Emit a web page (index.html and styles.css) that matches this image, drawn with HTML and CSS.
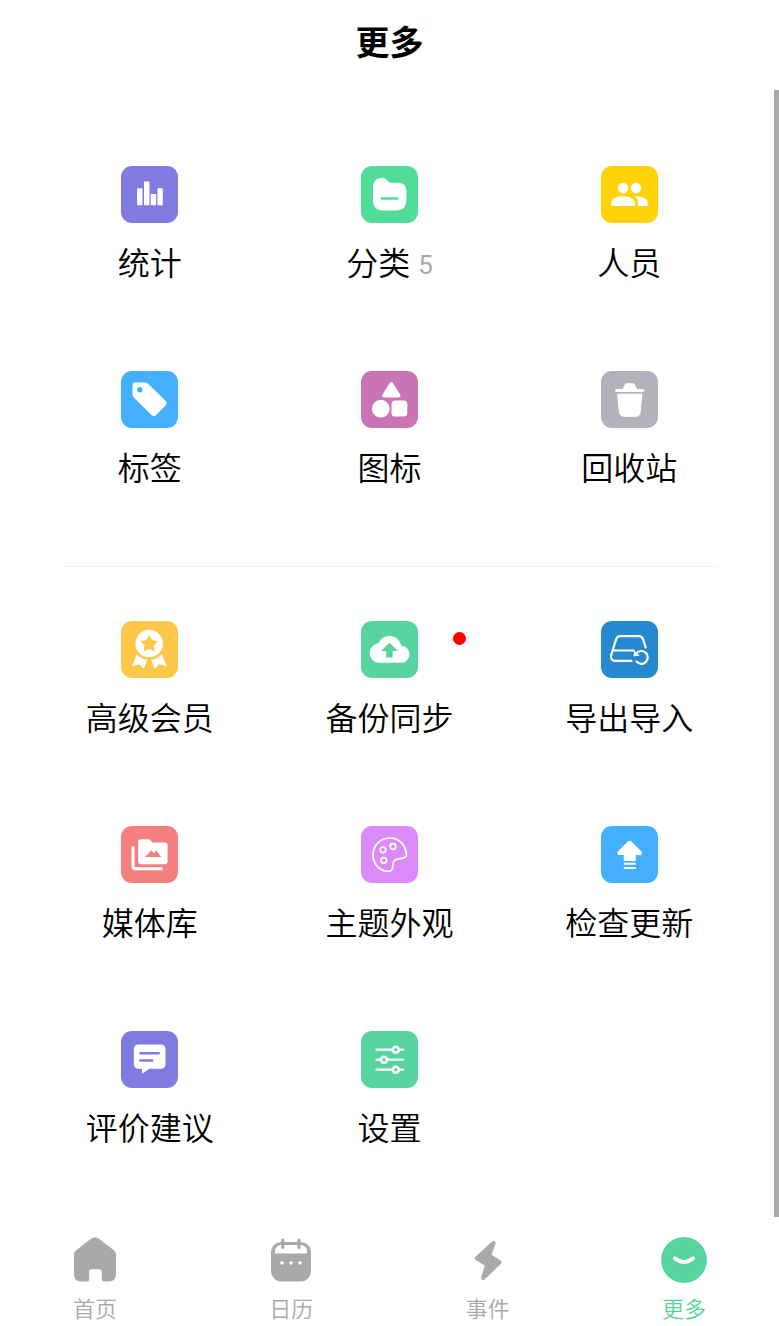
FILE: index.html
```html
<!DOCTYPE html>
<html lang="zh-CN">
<head>
<meta charset="utf-8">
<meta name="viewport" content="width=device-width, initial-scale=1">
<title>更多</title>
<link rel="stylesheet" href="styles.css">
</head>
<body>
<div class="app">
  <header class="header"><h1 class="title">更多</h1></header>

  <main class="content">
    <div class="scrollbar" aria-hidden="true"></div>

    <section class="group group-main">
      <a class="item" href="#stats">
        <svg class="tile violet" viewBox="0 0 57 57" aria-hidden="true"><g fill="#fff"><rect x="16" y="22.300" width="5.500" height="17" rx=".7"/><rect x="23" y="15.500" width="5.500" height="23.800" rx=".7"/><rect x="29.700" y="28" width="5.500" height="11.300" rx=".7"/><rect x="36.500" y="22.300" width="5.300" height="17" rx=".7"/></g></svg>
        <span class="label">统计</span>
      </a>
      <a class="item" href="#categories">
        <svg class="tile lime" viewBox="0 0 57 57" aria-hidden="true"><path fill="#fff" d="M12 22c0-6.500 3-10 8.500-10h1c4.500 0 5.500 4.800 8.500 4.800h6.500c6 0 8.800 2.800 8.800 8.200v9c0 7-3.500 10.500-10.500 10.500H22.500C15.500 44.500 12 41 12 34z"/><path class="stroke-lime" d="M20.800 32.500h15.400" stroke-width="2.600" stroke-linecap="round"/></svg>
        <span class="label">分类<span class="count">5</span></span>
      </a>
      <a class="item" href="#people">
        <svg class="tile yellow" viewBox="0 0 57 57" aria-hidden="true"><g fill="#fff"><circle cx="22" cy="22" r="5.200"/><circle cx="35" cy="22" r="5.200"/><path d="M10.300 40v-3.200c0-4.300 6-6.600 11.800-6.600s11.800 2.300 11.800 6.600V40zM33.600 30.200c6.800-.2 13.200 2.100 13.200 6.600V40H37v-3.200c0-2.800-1.200-5-3.400-6.600z"/></g></svg>
        <span class="label">人员</span>
      </a>
      <a class="item" href="#tags">
        <svg class="tile blue" viewBox="0 0 57 57" aria-hidden="true"><path fill="#fff" stroke="#fff" stroke-width="2" stroke-linejoin="round" d="M14 12.500h9.800c1 0 1.800.3 2.500 1l17.300 16.800c1.200 1.200 1.200 2.500 0 3.700l-9 9c-1.200 1.200-2.500 1.200-3.700 0L13.700 26c-.8-.8-1.200-1.500-1.200-2.600V14c0-.9.600-1.500 1.500-1.500z"/><circle class="fill-blue" cx="18.800" cy="18.800" r="2.700"/></svg>
        <span class="label">标签</span>
      </a>
      <a class="item" href="#icons">
        <svg class="tile pink" viewBox="0 0 57 57" aria-hidden="true"><g fill="#fff"><path d="M28.800 11.800c.7-1.200 2.300-1.200 3 0l7.300 11.800c.9 1.500.2 2.900-1.500 2.900H23c-1.700 0-2.400-1.400-1.500-2.900z"/><circle cx="19.800" cy="37.700" r="8.900"/><rect x="30.500" y="29.500" width="15.800" height="16" rx="3.500"/></g></svg>
        <span class="label">图标</span>
      </a>
      <a class="item" href="#trash">
        <svg class="tile gray" viewBox="0 0 57 57" aria-hidden="true"><g fill="#fff"><path d="M15.500 18h6.200l1.600-3.600c.8-1.700 1.500-2.100 3.200-2.100h4.700c1.700 0 2.400.4 3.200 2.100L36 18h6c1.900 0 1.900 3 0 3H15.500c-1.900 0-1.900-3 0-3z"/><path d="M16.700 23.200h24.200l-1.700 17.700c-.3 3-1.800 4.400-4.700 4.400H23c-2.900 0-4.300-1.500-4.600-4.400z" stroke="#fff" stroke-linejoin="round"/></g></svg>
        <span class="label">回收站</span>
      </a>
    </section>

    <section class="group group-more">
      <a class="item" href="#premium">
        <svg class="tile amber" viewBox="0 0 57 57" aria-hidden="true"><g fill="#fff"><circle cx="28.200" cy="22.500" r="13.700"/><path d="M15.800 33.200c2.800 3.400 6.200 5 10.400 5.500L22.700 47.700l-4.500-4.500-7.200 2zM40.600 33.200c-2.800 3.400-6.200 5-10.400 5.500l3.500 9 4.500-4.500 7.700 2z"/></g><path class="fill-amber stroke-amber" stroke-linejoin="round" d="M28.200 14.500l2.500 5.100 5.600.8-4 4 .9 5.600-5-2.700-5 2.700.9-5.600-4-4 5.600-.8z"/></svg>
        <span class="label">高级会员</span>
      </a>
      <a class="item" href="#backup">
        <svg class="tile green" viewBox="0 0 57 57" aria-hidden="true"><path fill="#fff" d="M18.500 41.800C12.800 41.800 8.800 37.500 8.800 32c0-5.200 3.700-9.200 8.700-9.800C19.600 17.800 23.700 15 28.500 15c5.900 0 10.700 4.200 11.800 9.800 4.500.3 8.200 3.800 8.200 8.400 0 4.800-3.800 8.600-8.600 8.600z"/><path class="fill-green" d="M28.500 21.700l8.400 8.300h-5.200v6.500h-6.500V30H20z"/></svg>
        <span class="label">备份同步</span>
        <span class="badge"></span>
      </a>
      <a class="item" href="#transfer">
        <svg class="tile ocean" viewBox="0 0 57 57" aria-hidden="true"><g fill="none" stroke="#fff" stroke-width="2.200" stroke-linecap="round" stroke-linejoin="round"><path d="M44.700 26.500l-2.800-8.300c-.9-2.400-1.700-3-4-3H19.300c-2.500 0-3.300.7-4.100 3L10.300 33.500c-1.200 3.800.7 6.300 4 6.300h16.200M12 29.500h20.500"/><path d="M35.300 32.400a6.400 6.400 0 1 1 .2 8.200"/></g><path fill="#fff" d="M32.600 35.200l6.200-.4-5.600-5.300z"/></svg>
        <span class="label">导出导入</span>
      </a>
      <a class="item" href="#media">
        <svg class="tile coral" viewBox="0 0 57 57" aria-hidden="true"><path fill="#fff" d="M17.200 16c0-2 1-2.800 2.800-2.800h7.500c1 0 1.700.4 2.300 1.200l1.800 2.100h12c2 0 3 1 3 3v15.700c0 2-1 3-3 3H20.200c-2 0-3-1-3-3z"/><path d="M12 20.200v20.300c0 1.500.8 2.200 2.200 2.200h27.300" fill="none" stroke="#fff" stroke-width="3"/><path class="fill-coral" d="M24 31l6.200-6.500 3 2.700L35 24l5.300 7z"/></svg>
        <span class="label">媒体库</span>
      </a>
      <a class="item" href="#theme">
        <svg class="tile orchid" viewBox="0 0 57 57" aria-hidden="true"><g fill="none" stroke="#fff" stroke-width="1.700" stroke-linejoin="round"><path d="M26.500 45.300C18 44.600 12 37.500 12 29c0-9.800 7.500-17 17-17 8.700 0 14.800 6 16.500 15.500.5 3-1.500 4.300-4.300 4.800-4.400.7-8.400.6-9.200 5-.6 4.600.4 8.300-5.500 8z"/><circle cx="22" cy="23.800" r="2.800"/><circle cx="32" cy="20.500" r="2.800"/><circle cx="22.800" cy="34.300" r="2.800"/></g></svg>
        <span class="label">主题外观</span>
      </a>
      <a class="item" href="#update">
        <svg class="tile blue" viewBox="0 0 57 57" aria-hidden="true"><g fill="#fff"><path d="M27.200 15.300c1-.9 2-.9 3 0l10.200 10.200c1.500 1.600.8 3.500-1.300 3.500h-4.300v6H22.700v-6h-4.500c-2.100 0-2.700-1.900-1.200-3.500z"/><rect x="22.700" y="36.700" width="12.100" height="2" rx=".8"/><rect x="22.700" y="41" width="12.100" height="2" rx=".8"/></g></svg>
        <span class="label">检查更新</span>
      </a>
      <a class="item" href="#feedback">
        <svg class="tile violet" viewBox="0 0 57 57" aria-hidden="true"><path fill="#fff" d="M17.500 13.500h22.300c3 0 4.700 1.700 4.700 4.700V33c0 3-1.700 4.700-4.700 4.700H28.500L21 43v-5.300h-3.500c-3 0-4.700-1.700-4.700-4.700V18.200c0-3 1.700-4.700 4.700-4.700z"/><path class="stroke-violet" d="M19.300 22.300h18.400M19.300 29.500h12" stroke-width="2.400" stroke-linecap="round"/></svg>
        <span class="label">评价建议</span>
      </a>
      <a class="item" href="#settings">
        <svg class="tile green" viewBox="0 0 57 57" aria-hidden="true"><path d="M15.500 18.700h26.700M15.500 28.700h26.700M15.500 38.700h26.700" stroke="#fff" stroke-width="2.300" stroke-linecap="round"/><g class="fill-green" stroke="#fff" stroke-width="2.500"><circle cx="34.800" cy="18.700" r="3"/><circle cx="23" cy="28.700" r="3"/><circle cx="34.800" cy="38.700" r="3"/></g></svg>
        <span class="label">设置</span>
      </a>
    </section>
  </main>

  <nav class="tabs">
    <a class="tab" href="#home">
      <svg class="tab-icon" viewBox="0 0 46 46" aria-hidden="true"><path fill="currentColor" d="M18.300 2.300c3.200-2.400 6.200-2.400 9.400 0L41.500 13c1.800 1.400 2.500 2.900 2.500 5.200v18.300c0 5.500-2.500 8-7.500 8h-4.200c-1.800 0-2.500-.8-2.500-2.500v-7c0-2-.8-2.700-2.800-2.700h-7c-2 0-2.800.7-2.800 2.700v7c0 1.700-.8 2.500-2.500 2.500h-5.200c-5 0-7.500-2.500-7.500-8V18.200c0-2.300.7-3.800 2.500-5.200z"/></svg>
      <span class="tab-label">首页</span>
    </a>
    <a class="tab" href="#calendar">
      <svg class="tab-icon" viewBox="0 0 46 46" aria-hidden="true"><rect x="3" y="5" width="40" height="39.500" rx="10" fill="currentColor"/><path fill="#fff" d="M7 16.500V15c0-4.800 2.500-7 7-7h18c4.500 0 7 2.200 7 7v1.500z"/><path d="M14.800 3v7.500M31 3v7.500" stroke="currentColor" stroke-width="3.200" stroke-linecap="round"/><g fill="#fff"><circle cx="14" cy="26" r="1.800"/><circle cx="23" cy="26" r="1.800"/><circle cx="32" cy="26" r="1.800"/></g></svg>
      <span class="tab-label">日历</span>
    </a>
    <a class="tab" href="#events">
      <svg class="tab-icon" viewBox="0 0 46 46" aria-hidden="true"><path fill="currentColor" stroke="currentColor" stroke-width="4" stroke-linejoin="round" d="M28.500 6L11.800 21.200l10.300 6.400L18.200 41 34.500 25.200l-10.400-6.400z"/></svg>
      <span class="tab-label">事件</span>
    </a>
    <a class="tab tab-active" href="#more" aria-current="page">
      <svg class="tab-icon" viewBox="0 0 46 46" aria-hidden="true"><circle cx="23" cy="23" r="22.900" fill="currentColor"/><path d="M14 21.300c5.700 5 12.300 5 18 0" fill="none" stroke="#fff" stroke-width="4" stroke-linecap="round"/></svg>
      <span class="tab-label">更多</span>
    </a>
  </nav>
</div>
</body>
</html>
```
FILE: styles.css
```css
* {
  box-sizing: border-box;
}

body {
  margin: 0;
  background: #fff;
  color: #000;
  font-family: "Noto Sans CJK SC", sans-serif;
  font-weight: 350;
}

a {
  color: inherit;
  text-decoration: none;
}

.app {
  display: flex;
  flex-direction: column;
  min-height: 100vh;
}

.header {
  display: flex;
  justify-content: center;
  padding: 17px 0 25px;
}

.title {
  margin: 0;
  font-size: 34px;
  line-height: 48px;
  font-weight: 700;
}

.content {
  position: relative;
  flex: 1;
}

.scrollbar {
  position: absolute;
  top: 0;
  right: 0;
  bottom: 0;
  width: 5px;
  background: #aaa;
}

.group {
  display: grid;
  grid-template-columns: repeat(3, 1fr);
  row-gap: 86px;
  padding: 0 30px;
}

.group-main {
  padding-top: 76px;
  padding-bottom: 76px;
}

.group-more {
  position: relative;
  padding-top: 55px;
  padding-bottom: 66px;
}

.group-more::before {
  content: "";
  position: absolute;
  top: 0;
  left: 62px;
  right: 61px;
  height: 1px;
  background: #f2f2f2;
}

.item {
  position: relative;
  display: flex;
  flex-direction: column;
  align-items: center;
  gap: 14px;
}

.tile {
  width: 57px;
  height: 57px;
  border-radius: 11px;
}

.label {
  display: flex;
  align-items: center;
  font-size: 32px;
  line-height: 48px;
}

.count {
  margin-left: 8px;
  padding-top: 8px;
  color: #aaa;
  font-family: Roboto, sans-serif;
  font-size: 26px;
  line-height: 40px;
  font-weight: 400;
}

.badge {
  position: absolute;
  top: 11px;
  right: 43px;
  width: 13px;
  height: 13px;
  border-radius: 50%;
  background: #f00;
}

.violet { background: #807be0; }
.lime { background: #51dd99; }
.yellow { background: #ffd20a; }
.blue { background: #43b0ff; }
.pink { background: #c975b5; }
.gray { background: #b2b3ba; }
.amber { background: #fdc74a; }
.green { background: #58d59e; }
.ocean { background: #2589cf; }
.coral { background: #f47f7e; }
.orchid { background: #db8bf9; }

.fill-blue { fill: #43b0ff; }
.fill-amber { fill: #fdc74a; }
.fill-green { fill: #58d59e; }
.fill-coral { fill: #f47f7e; }
.stroke-lime { stroke: #51dd99; }
.stroke-amber { stroke: #fdc74a; }
.stroke-violet { stroke: #807be0; }

.tabs {
  display: flex;
  justify-content: space-between;
  padding: 20px 71px 0;
}

.tab {
  display: flex;
  flex-direction: column;
  align-items: center;
  gap: 8px;
  width: 48px;
  padding-bottom: 3px;
  color: #a9a9a9;
}

.tab-active {
  color: #58d59e;
}

.tab-icon {
  width: 46px;
  height: 46px;
}

.tab-label {
  font-size: 22px;
  line-height: 32px;
}
```
